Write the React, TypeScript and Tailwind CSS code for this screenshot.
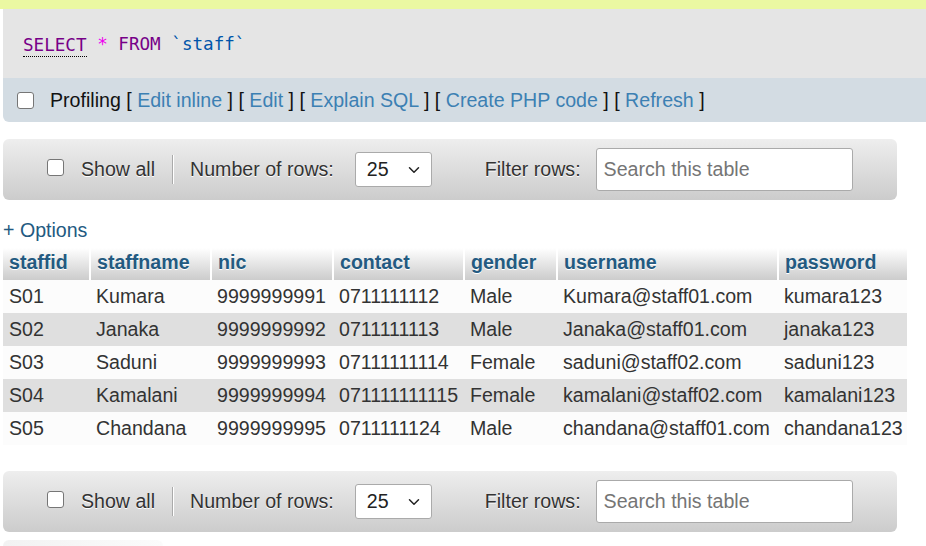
import { ChevronDown } from 'lucide-react';

const rows = [
  ['S01', 'Kumara', '9999999991', '0711111112', 'Male', 'Kumara@staff01.com', 'kumara123'],
  ['S02', 'Janaka', '9999999992', '0711111113', 'Male', 'Janaka@staff01.com', 'janaka123'],
  ['S03', 'Saduni', '9999999993', '07111111114', 'Female', 'saduni@staff02.com', 'saduni123'],
  ['S04', 'Kamalani', '9999999994', '071111111115', 'Female', 'kamalani@staff02.com', 'kamalani123'],
  ['S05', 'Chandana', '9999999995', '0711111124', 'Male', 'chandana@staff01.com', 'chandana123'],
];

const cols = [
  { name: 'staffid', w: 'w-[87px]' },
  { name: 'staffname', w: 'w-[121px]' },
  { name: 'nic', w: 'w-[122px]' },
  { name: 'contact', w: 'w-[131px]' },
  { name: 'gender', w: 'w-[93px]' },
  { name: 'username', w: 'w-[221px]' },
  { name: 'password', w: 'w-[129px]' },
];

const Checkbox = () => (
  <span className="inline-block w-[17px] h-[17px] rounded-[3px] border-[1.5px] border-[#767676] bg-white shrink-0" />
);

const NavBar = () => (
  <div className="w-[894px] h-[61px] rounded-[6px] bg-gradient-to-b from-[#eeeeee] to-[#cccccc] flex items-center text-[#333] [text-shadow:0_1px_0_#fff]">
    <div className="ml-[44px]">
      <Checkbox />
    </div>
    <span className="ml-[17px]">Show all</span>
    <span className="ml-[17px] w-[2px] h-[29px] border-l border-[#aaa] border-r border-r-white" />
    <span className="ml-[16px]">Number of rows:</span>
    <div className="ml-[21px] w-[77px] h-[35px] bg-white border border-[#aaa] rounded-[3px] flex items-center pl-[11px] pr-[8px] justify-between [text-shadow:none]">
      <span className="text-[#222]">25</span>
      <ChevronDown size={18} strokeWidth={2} className="text-[#222]" />
    </div>
    <span className="ml-[53px]">Filter rows:</span>
    <div className="ml-[15px] w-[257px] h-[43px] bg-white border border-[#aaa] rounded-[3px] flex items-center pl-[7px] text-[#757575] [text-shadow:none]">
      Search this table
    </div>
  </div>
);

export default function App() {
  return (
    <div className="w-[926px] h-[546px] overflow-hidden bg-white font-['Liberation_Sans',Arial,sans-serif] text-[19.6px] leading-none">
      <div className="h-[9px] bg-[#ebf8a2]" />
      <div className="pl-[3px]">
        <div className="h-[69px] bg-[#e5e5e5] flex items-center pl-[20px] pt-[3px] font-['DejaVu_Sans_Mono',monospace] text-[17.6px]">
          <span className="text-[#770088] border-b border-dotted border-black leading-[22px]">SELECT</span>
          <span className="text-[#ee00ee]">&nbsp;*&nbsp;</span>
          <span className="text-[#770088]">FROM</span>
          <span className="text-[#0055aa]">&nbsp;`staff`</span>
        </div>
        <div className="h-[44px] bg-[#d3dce3] rounded-bl-[6px] flex items-center pl-[14px] text-[#111]">
          <Checkbox />
          <span className="ml-[16px] pt-[2px]">
            Profiling [ <span className="text-[#3c80b3]">Edit inline</span> ] [{' '}
            <span className="text-[#3c80b3]">Edit</span> ] [{' '}
            <span className="text-[#3c80b3]">Explain SQL</span> ] [{' '}
            <span className="text-[#3c80b3]">Create PHP code</span> ] [{' '}
            <span className="text-[#3c80b3]">Refresh</span> ]
          </span>
        </div>
        <div className="mt-[17px]">
          <NavBar />
        </div>
        <div className="mt-[21px] h-[26px] text-[#235a81]">+ Options</div>
        <table className="border-collapse mt-[1px] table-fixed">
          <thead>
            <tr>
              {cols.map((c, i) => (
                <th
                  key={c.name}
                  className={`${c.w} h-[32px] p-0 pl-[6px] pb-[2px] text-left font-bold text-[#235a81] bg-gradient-to-b from-[#ffffff] to-[#cccccc] [text-shadow:0_1px_0_#fff] ${i < cols.length - 1 ? 'border-r-2 border-white' : ''}`}
                >
                  {c.name}
                </th>
              ))}
            </tr>
          </thead>
          <tbody>
            {rows.map((r, ri) => (
              <tr key={r[0]} className={ri % 2 === 1 ? 'bg-[#dfdfdf]' : 'bg-[#fcfcfc]'}>
                {r.map((v, ci) => (
                  <td key={ci} className="h-[33px] p-0 pl-[6px] text-[#333] whitespace-nowrap">
                    {v}
                  </td>
                ))}
              </tr>
            ))}
          </tbody>
        </table>
        <div className="mt-[26px]">
          <NavBar />
        </div>
        <div className="mt-[8px] w-[160px] h-[10px] rounded-t-[6px] bg-gradient-to-r from-[#f2f2f2] to-[#fbfbfb]" />
      </div>
    </div>
  );
}
